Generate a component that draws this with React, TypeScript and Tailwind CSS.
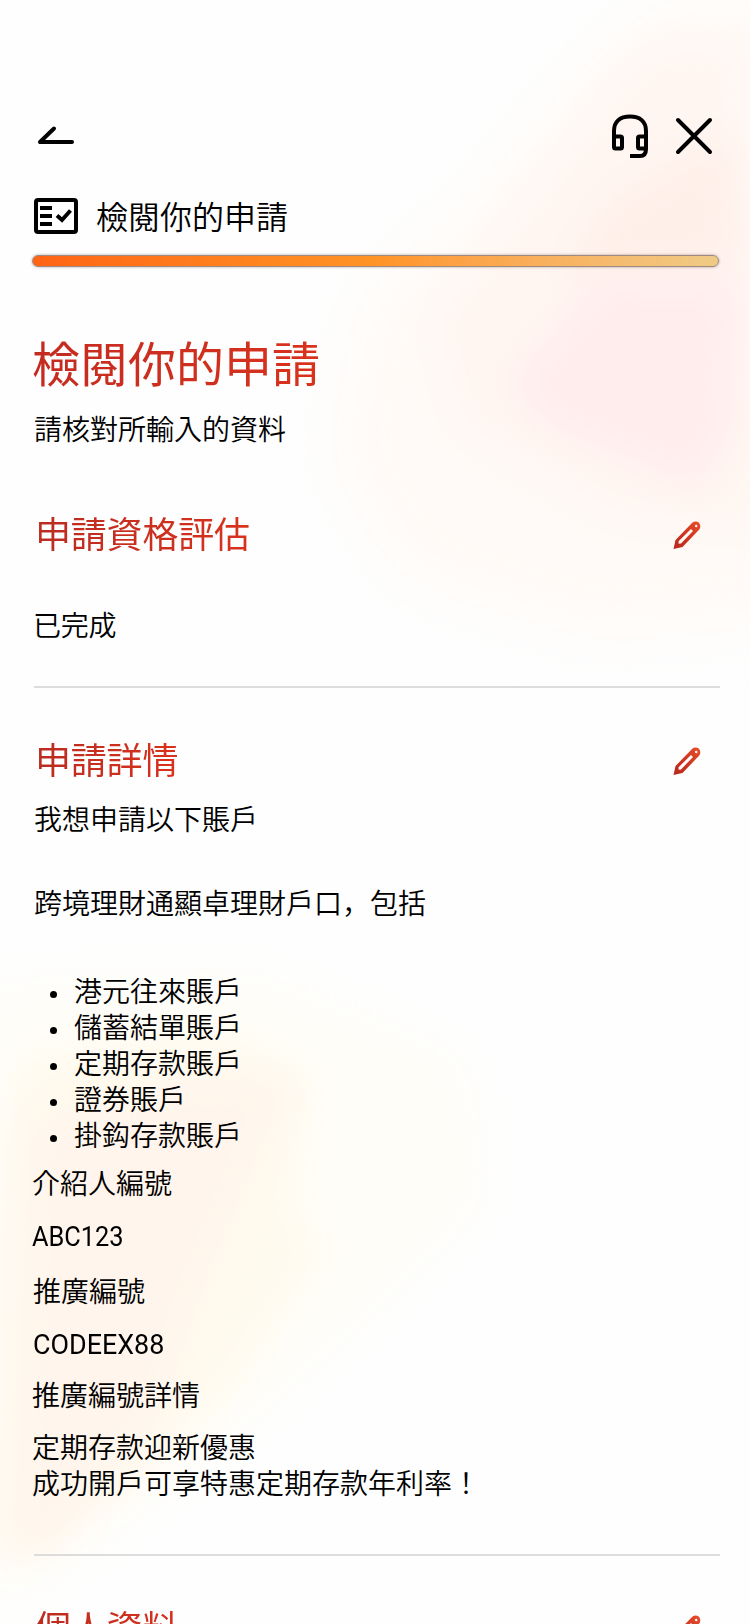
import type { ReactNode } from "react";

function BackArrow() {
  return (
    <svg className="block h-[24px] w-[40px]" viewBox="0 0 40 24" fill="none" stroke="#000" strokeWidth="4" strokeLinecap="round" strokeLinejoin="round">
      <path d="M20 4.500L6 18H38" />
    </svg>
  );
}

function Headset() {
  return (
    <svg className="block h-[46px] w-[40px]" viewBox="0 0 40 46" fill="none" stroke="#000" strokeWidth="4">
      <path d="M4 25V18C4 8.500 10 3.500 20 3.500S36 8.500 36 18V36Q36 43 30 43H20" />
      <rect x="4" y="23.500" width="8" height="12" rx="1.500" />
      <rect x="28" y="23.500" width="8" height="12" rx="1.500" />
    </svg>
  );
}

function Close() {
  return (
    <svg className="block h-[38px] w-[38px]" viewBox="0 0 38 38" fill="none" stroke="#000" strokeWidth="4" strokeLinecap="round">
      <path d="M3 3L35 35M35 3L3 35" />
    </svg>
  );
}

function ReviewIcon() {
  return (
    <svg className="block h-[36px] w-[44px]" viewBox="0 0 44 36" fill="none" stroke="#000" strokeWidth="4">
      <rect x="2" y="2" width="40" height="32" rx="2" />
      <path d="M6 10H18M6 18H18M6 26H18" />
      <path d="M23 17.500L28 22L36.500 12.500" />
    </svg>
  );
}

function Pencil() {
  return (
    <svg className="block h-[28px] w-[28px]" viewBox="0 0 28 28">
      <defs>
        <linearGradient id="pencil" x1="0" y1="1" x2="1" y2="0">
          <stop offset="0" stopColor="#b8281e" />
          <stop offset="0.500" stopColor="#d0351f" />
          <stop offset="1" stopColor="#e8502c" />
        </linearGradient>
      </defs>
      <path fill="url(#pencil)" fillRule="evenodd" d="M0.500 28L2.500 19L19 2Q22.500 -0.700 26 1.800Q28.500 5.200 26.300 8.500L9.500 26ZM5.600 20.200L5.600 22.800L8 22.400L20 10L18 8ZM23.200 3.800A1.200 1.200 0 1 0 23.210 6.200A1.200 1.200 0 1 0 23.200 3.800Z" />
    </svg>
  );
}

function Section({ title, children }: { title: string; children?: ReactNode }) {
  return (
    <section>
      <div className="flex h-[54px] items-center justify-between pl-[1px] pr-[19px]">
        <h2 className="-mt-[6px] bg-gradient-to-r from-[#bb2c20] to-[#d9321d] bg-clip-text text-[36px] leading-[54px] font-normal tracking-[-0.2px] text-transparent">{title}</h2>
        <button aria-label="edit" className="-mt-[1px]"><Pencil /></button>
      </div>
      {children}
    </section>
  );
}

const accounts = ["港元往來賬戶", "儲蓄結單賬戶", "定期存款賬戶", "證券賬戶", "掛鈎存款賬戶"];

export default function App() {
  return (
    <div className="relative h-[1624px] w-[750px] overflow-hidden bg-[#fefefe] font-['Noto_Sans_CJK_JP',sans-serif] text-[28px] leading-[36px] font-[350] text-black">
      <svg className="absolute inset-0 h-full w-full" viewBox="0 0 750 1624" aria-hidden="true">
        <defs>
          <filter id="wide" x="-40%" y="-40%" width="180%" height="180%"><feGaussianBlur stdDeviation="28" /></filter>
          <filter id="soft" x="-40%" y="-40%" width="180%" height="180%"><feGaussianBlur stdDeviation="18" /></filter>
        </defs>
        <path filter="url(#wide)" d="M660 0L800 -10V620L600 640L400 580L330 460L360 300L480 190L580 70Z" fill="#fffaf7" />
        <path filter="url(#soft)" d="M640 50L740 40L760 530L620 520L460 430L430 320L540 180Z" fill="#fff6f1" />
        <path filter="url(#soft)" d="M730 130L740 260L700 270L560 280L610 200Z" fill="#ffefe9" />
        <path filter="url(#soft)" d="M740 275L600 275L505 385L550 430L700 490L735 430Z" fill="#ffeded" />
        <path filter="url(#wide)" d="M-20 990L250 980L460 1060L480 1200L320 1350L170 1480L20 1590L-20 1590Z" fill="#fffdf7" />
        <path filter="url(#soft)" d="M20 1060L220 1030L310 1080L290 1200L320 1250L230 1390L120 1490L0 1570V1180Z" fill="#fffaee" />
        <path filter="url(#soft)" d="M30 1120L180 1080L290 1080L240 1200L200 1300L160 1420L60 1540L10 1560Z" fill="#fff5ec" />
      </svg>
      <div className="relative flex flex-col pl-[34px] pr-[30px]">
        <header className="mt-[112px] flex h-[48px] items-center justify-between pr-[7px]">
          <button aria-label="back" className="mt-[-1px]"><BackArrow /></button>
          <div className="flex items-center gap-[25px]">
            <button aria-label="support"><Headset /></button>
            <button aria-label="close"><Close /></button>
          </div>
        </header>
        <div className="mt-[34px] flex h-[44px] items-center gap-[18px]">
          <ReviewIcon />
          <span className="-mt-[2px] text-[32px] leading-[44px]">檢閱你的申請</span>
        </div>
        <div className="mt-[17px] -ml-[2px] mr-[1px] h-[12px] rounded-full border border-[#a08a80] bg-gradient-to-r from-[#ff6414] via-[#ff9426] to-[#efcb86] shadow-[0_0_3px_#00000055]" />
        <h1 className="mt-[58px] -ml-[2px] self-start bg-gradient-to-r from-[#c42b20] to-[#d9321d] bg-clip-text text-[48px] leading-[72px] font-normal text-transparent">檢閱你的申請</h1>
        <p className="mt-[13px]">請核對所輸入的資料</p>
        <div className="mt-[62px]">
          <Section title="申請資格評估"><p className="mt-[44px] -ml-[1px] tracking-[-0.300px]">已完成</p></Section>
        </div>
        <hr className="mt-[44px] border-t-2 border-[#dcdcdc]" />
        <div className="mt-[46px]">
          <Section title="申請詳情">
            <p className="mt-[12px]">我想申請以下賬戶</p>
            <p className="mt-[48px]">跨境理財通顯卓理財戶口，包括</p>
            <ul className="mt-[52px]">
              {accounts.map((a) => (
                <li key={a} className="flex items-center">
                  <span className="mt-[8px] ml-[16px] mr-[17px] size-[7px] rounded-full bg-black" />
                  {a}
                </li>
              ))}
            </ul>
            <div className="-ml-[2px]">
              <p className="mt-[12px]">介紹人編號</p>
              <p className="mt-[19px] origin-left scale-x-[0.905] font-['Roboto',sans-serif] font-normal">ABC123</p>
              <p className="mt-[17px] ml-[1px]">推廣編號</p>
              <p className="mt-[19px] ml-[1px] origin-left scale-x-[0.96] font-['Roboto',sans-serif] font-normal">CODEEX88</p>
              <p className="mt-[13px]">推廣編號詳情</p>
              <p className="mt-[16px]">定期存款迎新優惠<br />成功開戶可享特惠定期存款年利率！</p>
            </div>
          </Section>
        </div>
        <hr className="mt-[54px] border-t-2 border-[#dcdcdc]" />
        <div className="mt-[46px]"><Section title="個人資料" /></div>
      </div>
    </div>
  );
}
